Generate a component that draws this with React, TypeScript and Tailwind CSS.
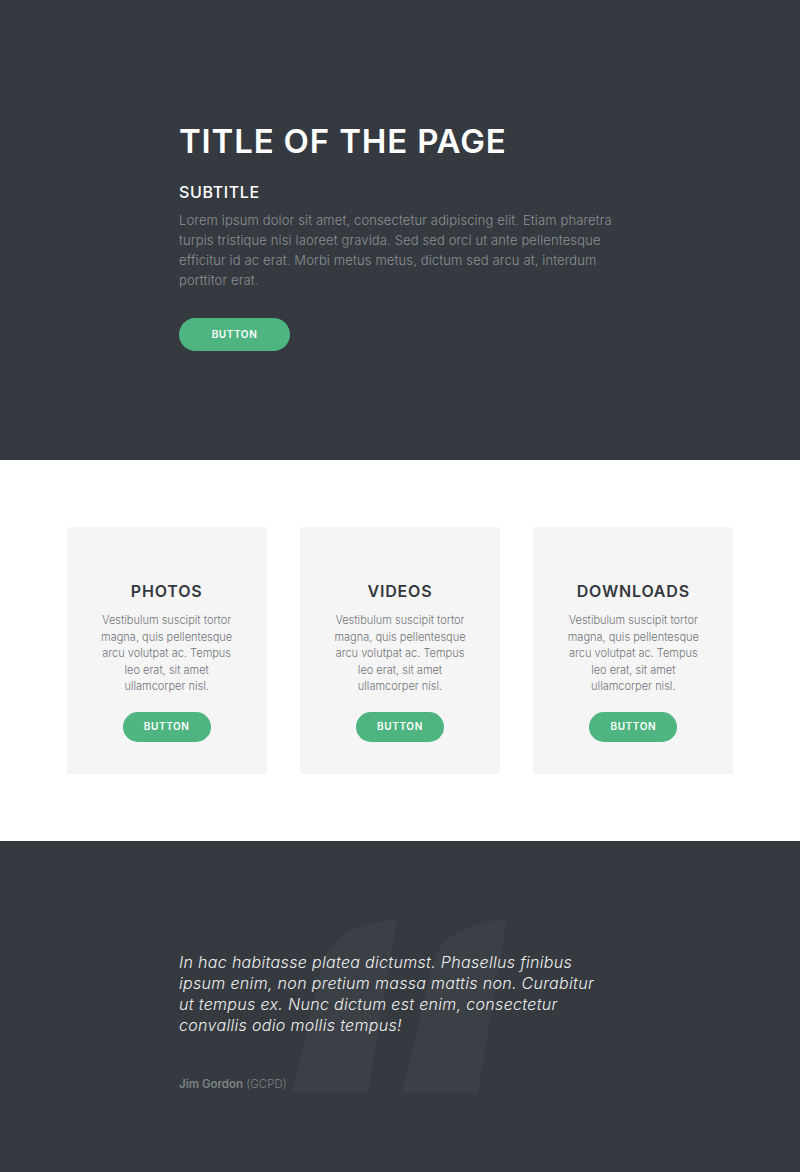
import React from 'react';

const cards = ['PHOTOS', 'VIDEOS', 'DOWNLOADS'];

function GreenButton({ small }: { small?: boolean }) {
  return (
    <button
      className={`${
        small ? 'w-[88px] h-[30px]' : 'w-[111px] h-[33px]'
      } rounded-full bg-[#4eb581] text-white text-[10px] font-semibold tracking-[0.06em]`}
    >
      BUTTON
    </button>
  );
}

function QuoteMark() {
  return (
    <svg
      className="absolute left-0 top-0"
      width="800"
      height="331"
      viewBox="0 840 800 331"
      aria-hidden="true"
    >
      <path d="M397 918 L368 1092 L292 1092 L322 965 Q332 924 397 918 Z" fill="#3b3f46" />
      <path d="M507 918 L478 1092 L402 1092 L432 965 Q442 924 507 918 Z" fill="#3b3f46" />
    </svg>
  );
}

export default function App() {
  return (
    <div className="w-full font-['Inter',sans-serif]">
      {/* hero */}
      <section className="h-[460px] bg-[#353a40] pl-[179px] pt-[120px]">
        <h1 className="text-[33px] leading-[42px] font-semibold text-white tracking-[0.025em]">
          TITLE OF THE PAGE
        </h1>
        <h2 className="mt-[19px] text-[16px] leading-[22px] font-medium text-white tracking-[0.04em]">
          SUBTITLE
        </h2>
        <p className="mt-[7px] w-[452px] text-[13px] leading-[20px] font-light tracking-[0.01em] text-[#8b8f94]">
          Lorem ipsum dolor sit amet, consectetur adipiscing elit. Etiam pharetra turpis tristique
          nisi laoreet gravida. Sed sed orci ut ante pellentesque efficitur id ac erat. Morbi metus
          metus, dictum sed arcu at, interdum porttitor erat.
        </p>
        <div className="mt-[28px]">
          <GreenButton />
        </div>
      </section>

      {/* features */}
      <section className="h-[381px] bg-white pt-[67px]">
        <div className="mx-auto w-[667px] grid grid-cols-3 gap-[33px]">
          {cards.map((c) => (
            <div
              key={c}
              className="h-[247px] rounded-[3px] bg-[#f5f5f5] flex flex-col items-center pt-[53px] text-center"
            >
              <h3 className="text-[16px] leading-[22px] font-semibold text-[#34383e] tracking-[0.05em]">
                {c}
              </h3>
              <p className="mt-[10px] w-[137px] text-[11px] leading-[16.5px] font-light text-[#727478]">
                Vestibulum suscipit tortor magna, quis pellentesque arcu volutpat ac. Tempus leo
                erat, sit amet ullamcorper nisl.
              </p>
              <div className="mt-[17px]">
                <GreenButton small />
              </div>
            </div>
          ))}
        </div>
      </section>

      {/* quote */}
      <section className="relative h-[331px] bg-[#353a40] overflow-hidden">
        <QuoteMark />
        <div className="relative pl-[179px] pt-[111px]">
          <p className="w-[424px] text-[16px] leading-[21px] font-light italic tracking-[0.02em] text-[#eeeeee]">
            In hac habitasse platea dictumst. Phasellus finibus ipsum enim, non pretium massa mattis
            non. Curabitur ut tempus ex. Nunc dictum est enim, consectetur convallis odio mollis
            tempus!
          </p>
          <p className="mt-[40px] text-[11.5px] leading-[16px] text-[#7d8186]">
            <span className="font-semibold">Jim Gordon</span>{' '}
            <span className="font-light">(GCPD)</span>
          </p>
        </div>
      </section>
    </div>
  );
}
